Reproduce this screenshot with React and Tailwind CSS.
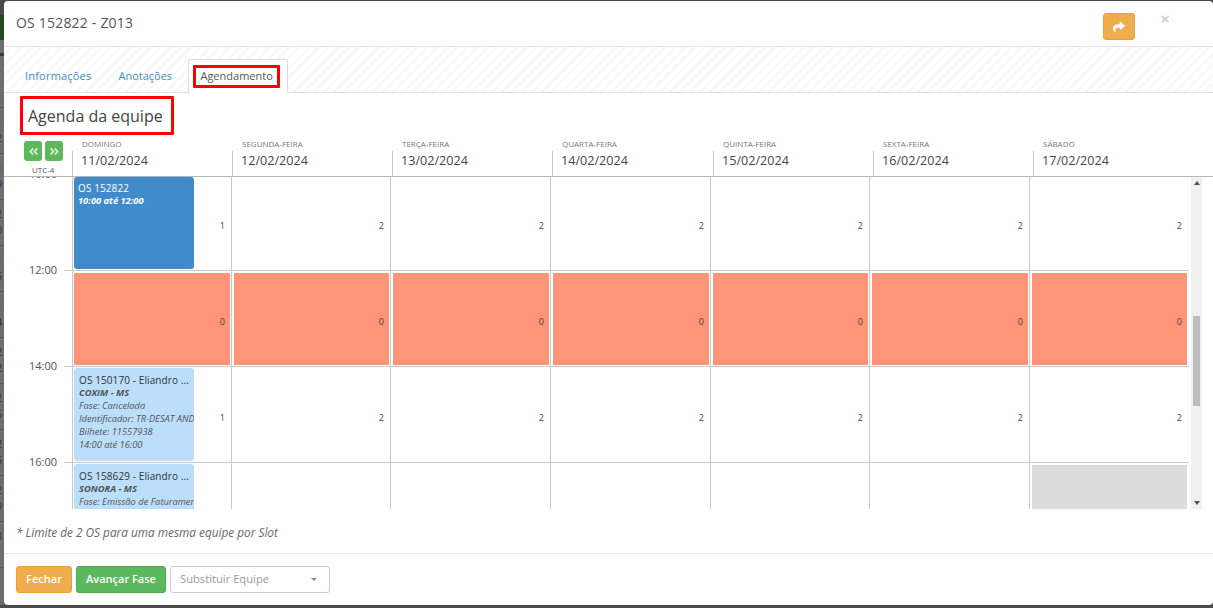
import { FaAngleDoubleLeft, FaAngleDoubleRight, FaShare } from "react-icons/fa";

const days = [
  { name: "DOMINGO", date: "11/02/2024", w: "w-[160px]" },
  { name: "SEGUNDA-FEIRA", date: "12/02/2024", w: "w-[160px]" },
  { name: "TERÇA-FEIRA", date: "13/02/2024", w: "w-[160px]" },
  { name: "QUARTA-FEIRA", date: "14/02/2024", w: "w-[161px]" },
  { name: "QUINTA-FEIRA", date: "15/02/2024", w: "w-[160px]" },
  { name: "SEXTA-FEIRA", date: "16/02/2024", w: "w-[160px]" },
  { name: "SÁBADO", date: "17/02/2024", w: "w-[150px]" },
];

const colWidths = ["w-[159px]", "w-[159px]", "w-[160px]", "w-[160px]", "w-[159px]", "w-[160px]", "w-[159px]"];

// what shows of the page behind the modal, in the 4px left of it
const behind = [
  ["1", "2"], ["1", "9"], ["2", "0"], ["1", "5"], ["1", "4"], ["2", "2"], ["2", "5"], ["2", "5"], ["2", "9"], ["8", ""],
];

function Cell({ w, count, countTop, isFirst, children, tone }) {
  return (
    <div className={`relative shrink-0 h-full border-l border-[#c8c8c8] ${w}`}>
      {tone === "red" && (
        <div className={`absolute right-[1px] top-[2px] bottom-[1px] bg-[#ff9478] ${isFirst ? "left-[1px]" : "left-[2px]"}`} />
      )}
      {tone === "gray" && <div className="absolute left-[2px] right-[1px] top-[2px] bottom-0 bg-[#dcdcdc]" />}
      {children}
      {count !== undefined && (
        <span className={`absolute right-[6px] text-[9px] leading-[12px] text-[#444] ${countTop}`}>{count}</span>
      )}
    </div>
  );
}

function Row({ label, labelTop = "-top-[8px]", h, counts, countTop, tone, first, lastGray }) {
  return (
    <div className={`relative ml-[60px] flex w-[1125px] border-b border-[#c8c8c8] pl-[8px] ${h}`}>
      {label && (
        <span className={`absolute -left-[35px] text-[11px] leading-[14px] text-[#555] ${labelTop}`}>{label}</span>
      )}
      {colWidths.map((w, i) => (
        <Cell
          key={i}
          w={w}
          isFirst={i === 0}
          count={counts ? counts[i] : undefined}
          countTop={countTop}
          tone={tone || (lastGray && i === 6 ? "gray" : undefined)}
        >
          {i === 0 ? first : null}
        </Cell>
      ))}
    </div>
  );
}

function EventCard({ dark, title, children, className }) {
  return (
    <div
      className={`absolute left-[1px] w-[120px] overflow-hidden whitespace-nowrap rounded-[3px] ${
        dark ? "bg-[#428bca] pl-[4px] pt-[5px] text-white" : "bg-[#bbdefb] pl-[5px] pt-[6px] text-[#333]"
      } ${className}`}
    >
      <div className="text-[10px] leading-[12px] tracking-[0.1px]">{title}</div>
      {children}
    </div>
  );
}

function Line({ bold, children, light }) {
  return (
    <div className={`text-[9.3px] leading-[13px] italic ${bold ? "font-bold" : ""} ${light ? "text-white" : "text-[#555]"}`}>
      {children}
    </div>
  );
}

export default function App() {
  return (
    <div className="relative h-[608px] w-[1213px] overflow-hidden bg-[#4a4a4a] pl-[4px] pt-[1px] font-['Open_Sans',sans-serif]">
      {/* pagina atras do modal */}
      <div className="absolute left-0 top-0 h-[605px] w-[4px] overflow-hidden bg-[#6e6e6e]">
        <div className="h-[15px] bg-[#4a4a4a]" />
        <div className="h-[25px] bg-[#1f4a22]" />
        <div className="mt-[13px] h-[3px] bg-[#1f4a22]" />
        <div className="mt-[51px] h-[1px] bg-[#555]" />
        {behind.map((b, i) => (
          <div key={i} className="-ml-[4px] h-[46px] border-b border-[#555] pt-[6px] text-[11px] leading-[16px] text-[#2c3550]">
            <div>{b[0]}</div>
            <div>{b[1]}</div>
          </div>
        ))}
      </div>

      <div className="relative flex h-[604px] w-[1209px] flex-col rounded-[4px] bg-white">
        {/* cabecalho */}
        <div className="flex h-[46px] shrink-0 items-start border-b border-[#e5e5e5] pl-[12px]">
          <h4 className="mt-[13px] text-[14px] leading-[18px] tracking-[0.2px] text-[#555]">OS 152822 - Z013</h4>
          <div className="ml-auto mr-[43px] mt-[12px] flex items-start gap-[25px]">
            <button className="flex h-[27px] w-[32px] items-center justify-center rounded-[3px] border border-[#eea236] bg-[#f0ad4e]">
              <FaShare className="h-[12px] w-[12px] text-white" />
            </button>
            <span className="-mt-[1px] text-[17px] font-semibold leading-[14px] text-[#c9c9c9]">×</span>
          </div>
        </div>

        {/* abas */}
        <div className="flex h-[46px] shrink-0 items-end gap-[1px] border-b border-[#dddddd] bg-[repeating-linear-gradient(135deg,#ffffff,#ffffff_5px,#f7f7f7_5px,#f7f7f7_7px)] pl-[9px]">
          <a className="pb-[9px] pl-[12px] pr-[11px] text-[11px] leading-[14px] tracking-[0.2px] text-[#428bca]">Informações</a>
          <a className="pb-[9px] pl-[15px] pr-[16px] text-[11px] leading-[14px] text-[#428bca]">Anotações</a>
          <div className="relative -mb-[1px] ml-[-1px] flex h-[34px] w-[100px] items-start rounded-t-[3px] border border-b-0 border-[#dddddd] bg-white pl-[4px] pt-[5px]">
            <span className="flex h-[23px] w-[87px] items-center justify-center rounded-[1px] border-[3px] border-[#ff0000] text-[11px] text-[#555]">
              Agendamento
            </span>
          </div>
        </div>

        {/* agenda */}
        <div className="flex min-h-0 flex-1 flex-col">
          <div className="ml-[16px] mt-[3px] flex h-[39px] w-[154px] shrink-0 items-center rounded-[1px] border-[3px] border-[#ff0000] pl-[5px] text-[16px] text-[#444]">
            Agenda da equipe
          </div>

          <div className="relative flex h-[42px] shrink-0 border-b border-[#b8b8b8] pl-[20px]">
            <div className="w-[58px] shrink-0 pt-[6px]">
              <div className="flex gap-[3px]">
                <button className="flex h-[20px] w-[18px] items-center justify-center rounded-[3px] bg-[#5cb85c]">
                  <FaAngleDoubleLeft className="h-[11px] w-[11px] text-[#dff0d8]" />
                </button>
                <button className="flex h-[20px] w-[18px] items-center justify-center rounded-[3px] bg-[#5cb85c]">
                  <FaAngleDoubleRight className="h-[11px] w-[11px] text-[#dff0d8]" />
                </button>
              </div>
              <div className="mt-[3px] pl-[8px] text-[8px] leading-[11px] text-[#555]">UTC-4</div>
            </div>
            {days.map((d) => (
              <div key={d.name} className={`relative shrink-0 ${d.w}`}>
                <div className="absolute left-[-10px] top-[16px] bottom-0 border-l border-[#c8c8c8]" />
                <div className="pt-[3px] text-[8px] leading-[11px] text-[#777]">{d.name}</div>
                <div className="-ml-[1px] mt-[3px] text-[12.6px] font-medium leading-[18px] text-[#444]">{d.date}</div>
              </div>
            ))}
          </div>

          <div className="relative h-[332px] shrink-0 overflow-hidden">
            <Row
              h="h-[94px]"
              label="10:00"
              labelTop="-top-[10px]"
              counts={[1, 2, 2, 2, 2, 2, 2]}
              countTop="top-[43px]"
              first={
                <EventCard dark title="OS 152822" className="top-0 h-[92px]">
                  <Line bold light>10:00 até 12:00</Line>
                </EventCard>
              }
            />
            <Row h="h-[96px]" label="12:00" counts={[0, 0, 0, 0, 0, 0, 0]} countTop="top-[45px]" tone="red" />
            <Row
              h="h-[96px]"
              label="14:00"
              counts={[1, 2, 2, 2, 2, 2, 2]}
              countTop="top-[45px]"
              first={
                <EventCard title="OS 150170 - Eliandro ..." className="top-[1px] h-[93px]">
                  <Line bold>COXIM - MS</Line>
                  <Line>Fase: Cancelada</Line>
                  <Line>Identificador: TR-DESAT AND</Line>
                  <Line>Bilhete: 11557938</Line>
                  <Line>14:00 até 16:00</Line>
                </EventCard>
              }
            />
            <Row
              h="h-[96px]"
              label="16:00"
              lastGray
              first={
                <EventCard title="OS 158629 - Eliandro ..." className="top-[1px] h-[93px]">
                  <Line bold>SONORA - MS</Line>
                  <Line>Fase: Emissão de Faturamento</Line>
                </EventCard>
              }
            />
            <div className="absolute left-[1187px] top-0 bottom-0 flex w-[11px] flex-col items-center bg-[#f0f0f0]">
              <div className="mt-[4px] h-0 w-0 border-x-[3px] border-b-[4px] border-x-transparent border-b-[#505050]" />
              <div className="mt-[131px] h-[90px] w-[7px] bg-[#bdbdbd]" />
              <div className="mb-[4px] mt-auto h-0 w-0 border-x-[3px] border-t-[4px] border-x-transparent border-t-[#505050]" />
            </div>
          </div>

          <p className="ml-[12px] mt-[16px] text-[11.8px] italic leading-[15px] text-[#666]">
            * Limite de 2 OS para uma mesma equipe por Slot
          </p>
        </div>

        {/* rodape */}
        <div className="flex h-[52px] shrink-0 items-start gap-[4px] border-t border-[#e5e5e5] pl-[12px] pt-[12px]">
          <button className="h-[27px] w-[56px] rounded-[3px] border border-[#eea236] bg-[#f0ad4e] text-[11px] font-semibold text-white">
            Fechar
          </button>
          <button className="h-[27px] w-[90px] rounded-[3px] border border-[#4cae4c] bg-[#5cb85c] text-[11px] font-semibold text-white">
            Avançar Fase
          </button>
          <div className="flex h-[27px] w-[160px] items-center justify-between rounded-[3px] border border-[#cccccc] bg-white pl-[9px] pr-[12px] text-[11.2px] text-[#999]">
            Substituir Equipe
            <span className="h-0 w-0 border-x-[3px] border-t-[3px] border-x-transparent border-t-[#888]" />
          </div>
        </div>
      </div>
    </div>
  );
}
